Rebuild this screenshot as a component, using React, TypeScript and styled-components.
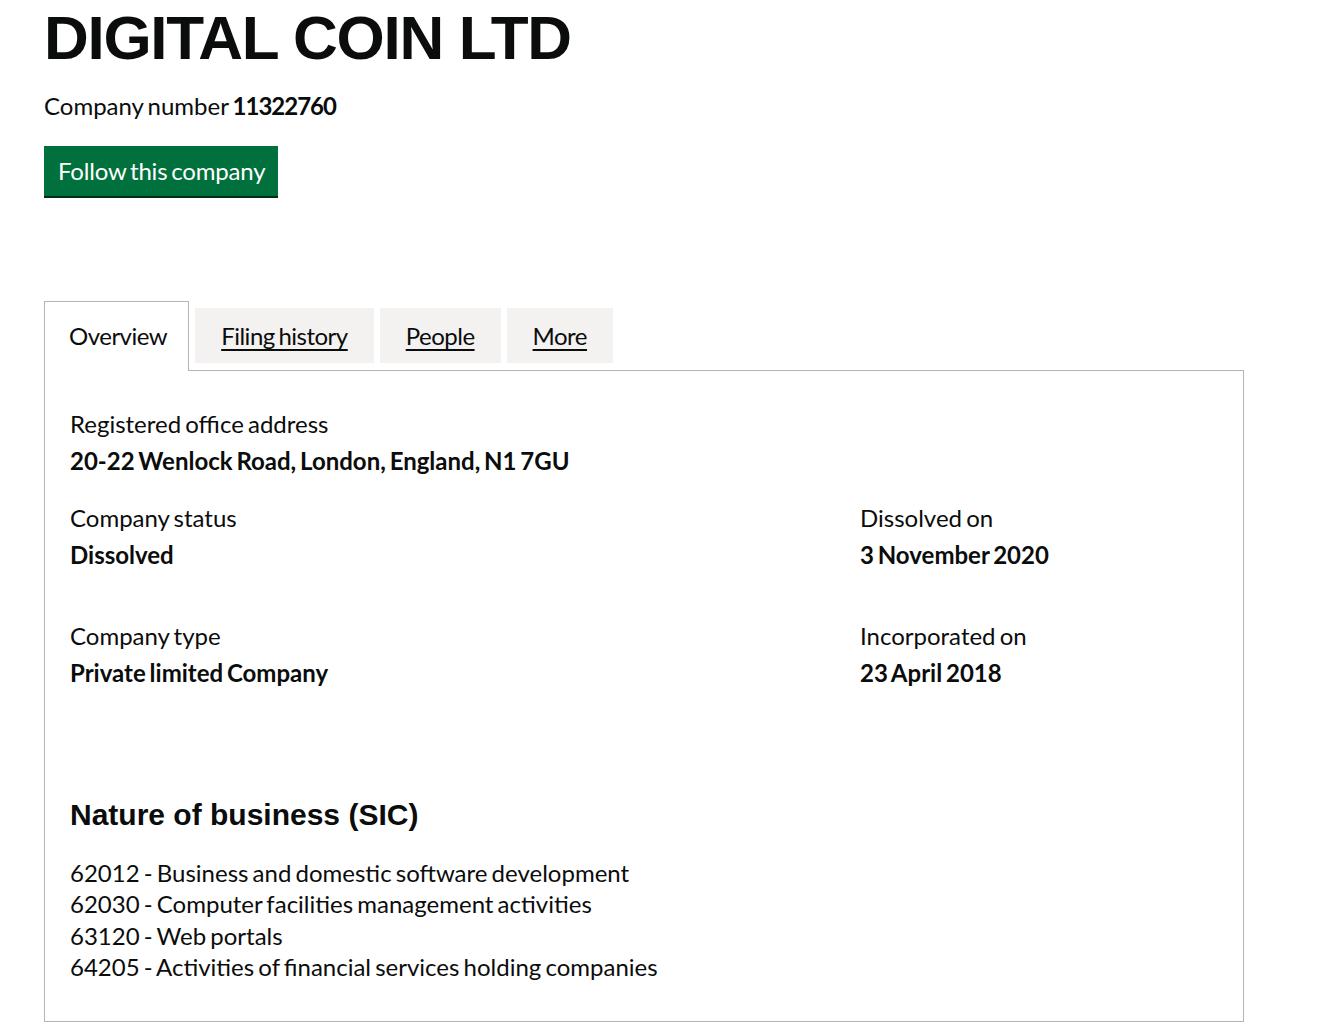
import styled, { createGlobalStyle } from "styled-components";

const GlobalStyle = createGlobalStyle`
  body {
    margin: 0;
    background: #fff;
    color: #0b0c0c;
    font-family: Lato, "Liberation Sans", sans-serif;
  }
`;

const sicCodes = [
  "62012 - Business and domestic software development",
  "62030 - Computer facilities management activities",
  "63120 - Web portals",
  "64205 - Activities of financial services holding companies",
];

const tabs = ["Overview", "Filing history", "People", "More"];

export default function App() {
  return (
    <Page>
      <GlobalStyle />
      <Title>DIGITAL COIN LTD</Title>
      <CompanyNumber>
        Company number <strong>11322760</strong>
      </CompanyNumber>
      <FollowButton>Follow this company</FollowButton>

      <TabList>
        {tabs.map((t, i) =>
          i === 0 ? (
            <SelectedTab key={t}>{t}</SelectedTab>
          ) : (
            <Tab key={t}>
              <TabLink href="#">{t}</TabLink>
            </Tab>
          )
        )}
      </TabList>

      <Panel>
        <Field>
          <Label>Registered office address</Label>
          <Value>20-22 Wenlock Road, London, England, N1 7GU</Value>
        </Field>

        <Row>
          <Field>
            <Label>Company status</Label>
            <Value>Dissolved</Value>
          </Field>
          <Field>
            <Label>Dissolved on</Label>
            <Value>3 November 2020</Value>
          </Field>
        </Row>

        <Row gap={51}>
          <Field>
            <Label>Company type</Label>
            <Value>Private limited Company</Value>
          </Field>
          <Field>
            <Label>Incorporated on</Label>
            <Value>23 April 2018</Value>
          </Field>
        </Row>

        <SectionHeading>Nature of business (SIC)</SectionHeading>
        <SicList>
          {sicCodes.map((s) => (
            <li key={s}>{s}</li>
          ))}
        </SicList>
      </Panel>
    </Page>
  );
}

const Page = styled.div`
  padding: 3px 0 10px 44px;
  width: 1200px;
  word-spacing: -2px;
`;

const Title = styled.h1`
  margin: 0;
  font-family: "Liberation Sans", Arial, sans-serif;
  font-weight: 700;
  font-size: 62px;
  line-height: 70px;
  letter-spacing: -1.3px;
  word-spacing: 0;
`;

const CompanyNumber = styled.p`
  margin: 18px 0 0;
  font-size: 24px;
  line-height: 30px;
  strong {
    font-weight: 700;
    letter-spacing: -1px;
  }
`;

const FollowButton = styled.button`
  display: block;
  margin-top: 25px;
  height: 52px;
  padding: 10px 13px 12px 14px;
  border: 0;
  background: #00703c;
  border-bottom: 2px solid #002d18;
  color: #fff;
  font-family: Lato, "Liberation Sans", sans-serif;
  font-size: 24px;
  line-height: 30px;
  letter-spacing: -0.2px;
  word-spacing: -2px;
  cursor: pointer;
`;

const TabList = styled.ul`
  display: flex;
  align-items: flex-end;
  gap: 6px;
  list-style: none;
  margin: 103px 0 0;
  padding: 0;
  font-size: 24px;
  line-height: 30px;
  letter-spacing: -0.5px;
`;

const SelectedTab = styled.li`
  position: relative;
  z-index: 1;
  margin-bottom: -1px;
  padding: 19px 21px 20px 24px;
  border: 1px solid #b1b4b6;
  border-bottom: 0;
  background: #fff;
`;

const Tab = styled.li`
  margin-bottom: 7px;
  padding: 13px 26px 12px;
  background: #f3f2f1;
`;

const TabLink = styled.a`
  color: #0b0c0c;
  text-decoration: underline;
  text-decoration-thickness: 2px;
  text-underline-offset: 4px;
`;

const Panel = styled.section`
  box-sizing: border-box;
  width: 1200px;
  border: 1px solid #b1b4b6;
  padding: 38px 25px 38px;
`;

const Row = styled.div<{ gap?: number }>`
  display: grid;
  grid-template-columns: 790px 1fr;
  margin-top: ${({ gap }) => gap ?? 27}px;
`;

const Field = styled.div``;

const Label = styled.div`
  font-size: 24px;
  line-height: 30px;
`;

const Value = styled.div`
  margin-top: 7px;
  font-size: 24px;
  line-height: 30px;
  font-weight: 700;
`;

const SectionHeading = styled.h2`
  margin: 109px 0 0;
  font-family: "Liberation Sans", Arial, sans-serif;
  font-size: 30px;
  line-height: 36px;
  font-weight: 700;
  word-spacing: 0;
`;

const SicList = styled.ul`
  list-style: none;
  margin: 24px 0 0;
  padding: 0;
  font-size: 24px;
  line-height: 31.4px;
`;
